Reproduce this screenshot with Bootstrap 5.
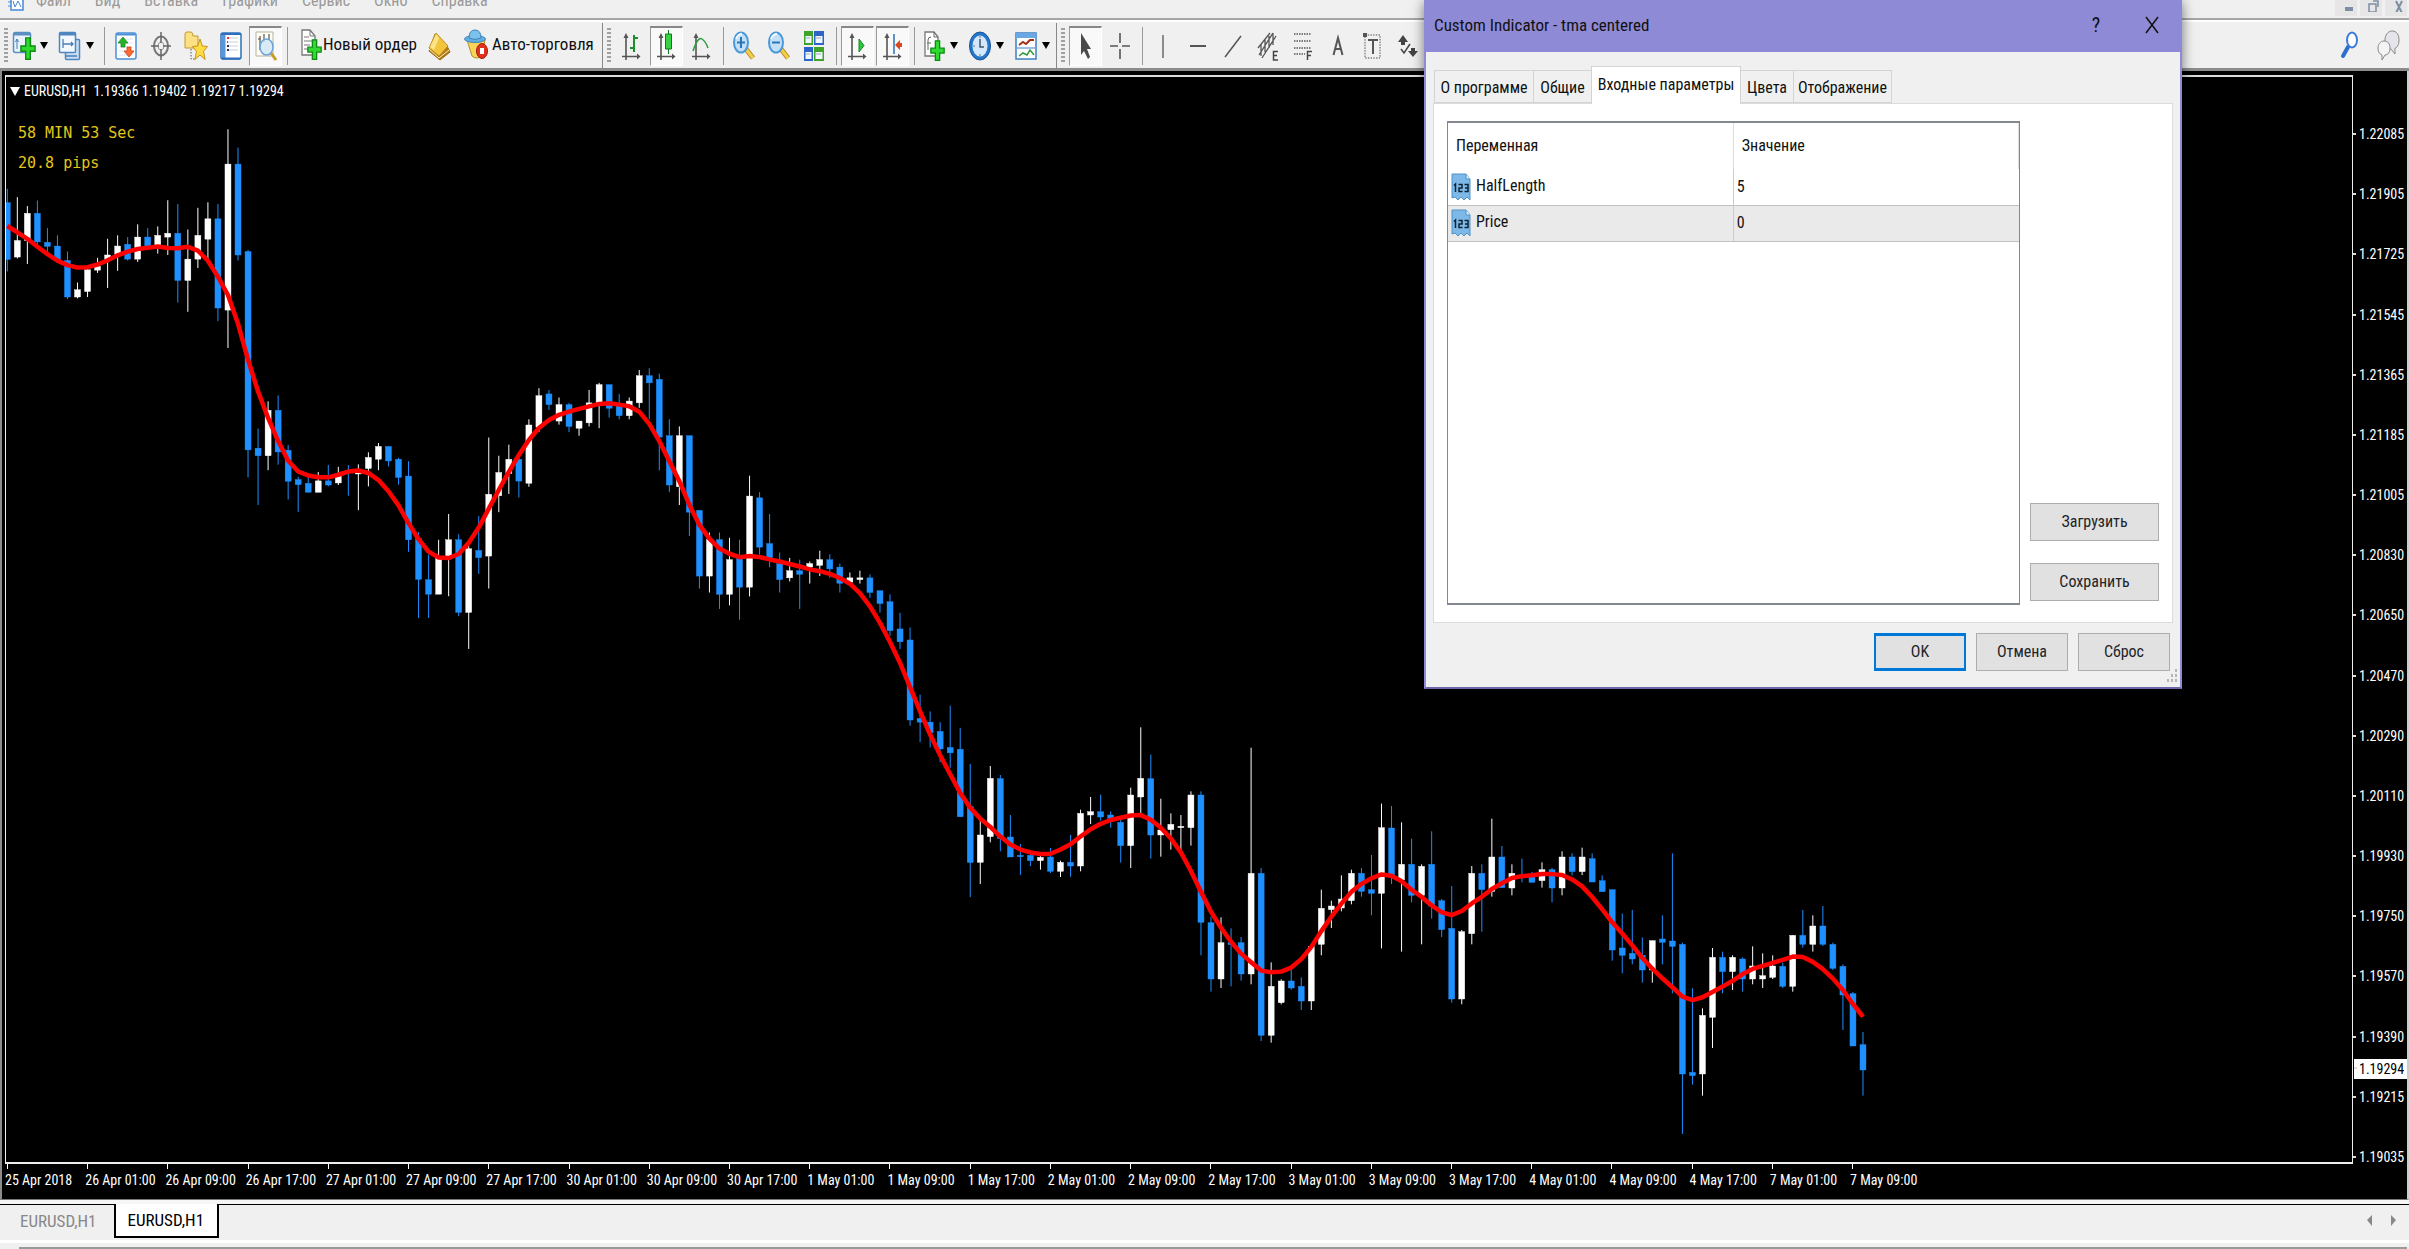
<!DOCTYPE html>
<html lang="ru">
<head>
<meta charset="utf-8">
<meta name="viewport" content="width=device-width, initial-scale=1">
<title>EURUSD,H1</title>
<link href="https://cdn.jsdelivr.net/npm/bootstrap@5.3.0/dist/css/bootstrap.min.css" rel="stylesheet">
<style>
:root{--ui:"Liberation Sans Narrow","Roboto Condensed","Liberation Sans",sans-serif;--face:#f0f0f0}
body{font-family:var(--ui);font-size:17px;line-height:20px;background:var(--face);color:#111;overflow:hidden}
button{font-family:inherit;color:inherit}
.menubar{height:18px;color:#999;overflow:hidden}
.menubar nav{padding-left:8px}
.menubar a{color:#999;text-decoration:none;font-size:16px;line-height:20px;margin:-9px 12px 0}
.menubar svg{width:16px;height:12px}
.winbtns{gap:3px;padding-right:2px}
.winbtns button{width:22px;height:16px;border:0;background:#e6e6e6;padding:0;display:flex;justify-content:center}
.toolbar{height:53px;padding-top:3px;border-top:2px solid #a6a6a6;border-bottom:3px solid #8c8c8c;box-shadow:inset 0 2px #fff}
.grip{width:4px;height:36px;background:repeating-linear-gradient(#a0a0a0 0 2px,transparent 2px 4px)}
.sep{width:8px;height:38px;background:linear-gradient(#999,#999) 4px 0/1px 100% no-repeat}
.dock{width:12px;height:46px;background:linear-gradient(#888,#888) 0 0/1px 100% no-repeat;padding-left:5px}
.tool{width:35px;height:42px;border:0;background:none;padding:0 1px}
.tool svg,.split svg,.wide svg,.tail svg{width:24px;height:32px;display:block}
.tool span{height:40px;width:33px;display:flex;align-items:center;justify-content:center}
.tool.on span{background:#f9f9f9;border:1px solid #fff;border-top:2px solid #888;border-left:1px solid #999}
.split{width:46px;border:0;background:none;padding:0 0 0 4px;display:flex;align-items:center;gap:4px}
.caret{width:0;border:4px solid transparent;border-top:7px solid #000;border-bottom:0}
.wide{border:0;background:none;padding:0 0 4px;display:flex;align-items:center;white-space:nowrap}
.tail{padding-right:8px;gap:15px}
.tail button{border:0;background:none;padding:0}
.frame{background:#000;border-left:2px solid #8c8c8c;border-right:2px solid #ccc;padding:4px 0 0 3px;border-bottom:1px solid #777;min-height:0}
.plot{border:1px solid #eee;border-top:2px solid #ddd;border-bottom:2px solid #eee;min-height:0}
.plot svg{position:absolute;inset:0;width:100%;height:100%}
.plot h1,.plot p{position:relative;margin:0;color:#fff}
.plot h1{font-size:14px;font-weight:400;line-height:20px;padding:4px 0 0 4px;gap:4px}
.plot h1 i{border:5px solid transparent;border-top:9px solid #fff;border-bottom:0}
.plot p{font:15px/30px "DejaVu Sans Mono",monospace;color:#e4c61c;padding-left:12px}
.plot .first{margin-top:17px}
.dates{width:82%;height:35px;color:#fff;font-size:14px}
.dates span{flex:1 1 0;white-space:nowrap;position:relative;padding-top:6px;line-height:20px}
.dates span::before{content:"";position:absolute;left:2px;top:0;width:1px;height:5px;background:#fff}
.prices{width:54px;color:#fff;font-size:14px;padding:50px 0 33px;position:relative}
.prices span{line-height:18px;padding-left:6px;position:relative}
.prices span::before{content:"";position:absolute;left:0;top:8px;width:3px;height:2px;background:#ddd}
.prices .quote{position:absolute;left:1px;right:0;top:984px;padding-left:5px;line-height:20px;background:#fff;color:#000}
.booktabs{height:39px;border-top:1px solid #000;margin-top:4px;box-shadow:0 -4px #f6f6f6;border-bottom:3px solid #fff}
.booktabs .nav-link{border:0;border-radius:0;color:#888;padding:5px 17px 0 20px;height:32px;line-height:22px}
.booktabs .nav-link.active{background:#fff;color:#000;border:2px solid #000;border-top:0;padding:5px 13px 0 12px;margin-top:-1px;height:34px}
.status{height:2px;margin:4px 2px 0 19px;background:#999}
.dlg{position:absolute;top:0;right:227px;width:758px;height:689px;background:var(--face);border:2px solid #8f8ad6;border-top:0;border-bottom-color:#6a66a8;box-shadow:0 2px 12px #0008}
.dlg header{height:52px;background:#8f8ad6;padding:0 16px 2px 8px}
.dlg header button{border:0;background:none;padding:0;width:24px;height:30px;display:flex;align-items:center;justify-content:center;font-size:20px}
.dlg .nav-tabs{padding:14px 0 0 8px;border:0;height:51px;align-items:flex-end}
.dlg .nav-tabs .nav-link{border:1px solid #d4d4d4;border-radius:0;color:#111;background:var(--face);padding:0;height:33px;line-height:34px;margin:0 -1px 0 0;text-align:center;font-size:16px;white-space:nowrap;flex:none}
.dlg .nav-tabs .nav-link.active{height:38px;background:#fff;border-bottom:0;line-height:36px;margin-bottom:-1px;position:relative}
.t1{width:100px}.t2{width:59px}.t3{width:150px}.t4{width:54px}.t5{width:99px}
.sheet{margin:0 7px;height:520px;background:#fff;border:1px solid #dcdcdc;padding:17px 13px 17px 13px;gap:10px}
.params{border:1px solid #828790;border-top-width:2px;border-bottom-width:2px}
.params table{width:100%;border-collapse:collapse;table-layout:fixed;font-size:16px}
.params th{height:46px;font-weight:400;padding:0 8px;border-right:1px solid #ddd}
.params td{height:36px;padding:0 4px 0 3px;border-right:1px solid #ccc;border-bottom:1px solid #c0c0c0}
.params td:last-child{border-right:0}
.params th:first-child{width:50%}
.params .pick{background:#eaeaea}
.params svg{width:20px;height:28px;margin-right:5px;vertical-align:middle}
.push{background:#e1e1e1;border:1px solid #adadad;border-radius:0;padding:0;height:38px;font-size:16px;line-height:36px}
.side{width:129px;gap:22px}
.foot{padding:10px 10px 0;gap:10px}
.foot .push{width:92px}
.push.ok{border:2px solid #0078d7;border-width:3px 2px;line-height:32px}
.sizer{position:absolute;right:3px;bottom:4px;width:10px;height:14px}
</style>
<script src="https://cdn.jsdelivr.net/npm/bootstrap@5.3.0/dist/js/bootstrap.bundle.min.js" defer></script>
</head>
<body class="vh-100 d-flex flex-column position-relative">

<svg class="d-none" aria-hidden="true">
 <symbol id="plus" viewBox="0 0 14 20" preserveAspectRatio="none"><path d="M5 .8h4v7h4.2v4.6H9v7H5v-7H.8V7.800H5z" fill="#2fd92f" stroke="#0c8a12" stroke-width="1.2"/></symbol>
 <symbol id="axes" viewBox="0 0 24 32"><path d="M7 5v25M3 26.500h17" stroke="#555" stroke-width="1.600" fill="none"/><path d="M7 3 4.500 8h5zM21.500 26.500 18 23.500v6z" fill="#555"/></symbol>
 <symbol id="glass" viewBox="0 0 24 32"><path d="m14 19 7 9" stroke="#b98a1e" stroke-width="5"/><path d="m14 19 7 9" stroke="#f4cf4e" stroke-width="3"/><ellipse cx="9" cy="12.500" rx="7" ry="10" fill="#c4e0f8" stroke="#4a9ad8" stroke-width="2"/><path d="M4 9q2-5 6-5" stroke="#f4faff" stroke-width="2" fill="none"/></symbol>
</svg>

<header class="menubar d-flex justify-content-between flex-shrink-0">
 <nav class="d-flex">
  <svg viewBox="0 0 16 12"><path d="M3 0v10h12V0" fill="#fff" stroke="#4a86d8" stroke-width="1.500"/><path d="m5 1 2 6 3-6 3 6M0 2h3M0 6h3" stroke="#4a86d8" fill="none"/></svg>
  <a href="#">Файл</a><a href="#">Вид</a><a href="#">Вставка</a><a href="#">Графики</a><a href="#">Сервис</a><a href="#">Окно</a><a href="#">Справка</a>
 </nav>
 <div class="winbtns d-flex">
  <button aria-label="Свернуть"><svg width="22" height="16"><path d="M7 9h8" stroke="#7d8ea3" stroke-width="4"/></svg></button>
  <button aria-label="Восстановить"><svg width="22" height="16"><path d="M6 4h7v8H6zM10 1h5v6" stroke="#7d8ea3" stroke-width="1.500" fill="none"/></svg></button>
  <button aria-label="Закрыть"><svg width="22" height="16"><path d="m8 13 6-12M8 1l6 12" stroke="#7d8ea3" stroke-width="2"/></svg></button>
 </div>
</header>

<div class="toolbar d-flex align-items-center flex-shrink-0">
 <div class="grip ms-1"></div>
 <button class="split" aria-label="Новый график"><svg viewBox="0 0 24 32"><rect x="1.500" y="2.500" width="17" height="20" rx="2" fill="#eaf3fc" stroke="#5b8fc4" stroke-width="1.500"/><path d="M2 4h16" stroke="#5b8fc4" stroke-width="3"/><path d="M5 9v10M3.500 12 5 9l1.500 3" stroke="#4a7db5" fill="none"/><use href="#plus" x="8" y="7" width="16" height="23"/></svg><i class="caret"></i></button>
 <button class="split" aria-label="Профили"><svg viewBox="0 0 24 32"><rect x="7.500" y="9.500" width="14" height="20" rx="1" fill="#c9def4" stroke="#4f86c0" stroke-width="1.500"/><rect x="1.500" y="2.500" width="16" height="20" rx="1" fill="#f2f8fe" stroke="#4f86c0" stroke-width="1.500"/><path d="M2 4h15" stroke="#4f86c0" stroke-width="3"/><path d="M5 9v9M5 14h10M13 12l2 2-2 2M8 26h11" stroke="#4a7db5" fill="none" stroke-width="1.300"/></svg><i class="caret"></i></button>
 <div class="sep"></div>
 <button class="tool" aria-label="Обзор рынка"><span><svg viewBox="0 0 24 32"><rect x="2" y="3" width="20" height="26" rx="2" fill="#fff" stroke="#4a90d9" stroke-width="1.500"/><path d="M3 4.500h18" stroke="#4a90d9" stroke-width="2"/><path d="M5 9h14M5 13h14M5 17h14M5 21h14M5 25h14" stroke="#d9e6f2"/><path d="m9 7 5 6h-3v4H7v-4H4z" fill="#27b327" stroke="#128012" stroke-width=".7"/><path d="m15 27 5-6h-3v-4h-4v4h-3z" fill="#ff6a33" stroke="#c03a10" stroke-width=".7"/></svg></span></button>
 <button class="tool" aria-label="Окно данных"><span><svg viewBox="0 0 24 32"><ellipse cx="12" cy="16" rx="7" ry="9.500" fill="none" stroke="#777" stroke-width="2"/><ellipse cx="12" cy="16" rx="3" ry="4" fill="none" stroke="#999"/><path d="M12 2v11M12 19v11M2 16h8M14 16h8" stroke="#666" stroke-width="1.500"/></svg></span></button>
 <button class="tool" aria-label="Навигатор"><span><svg viewBox="0 0 24 32"><path d="M1 4q0-2 2-2h4q2 0 2 4h5v12H1z" fill="#fbe184" stroke="#c49a2c"/><path d="M7 19v10h4" stroke="#555" stroke-dasharray="1.500 1.500" fill="none"/><path d="m16 9 2.300 7 5.200.5-4 5 1.600 8L16 25l-5.100 4.500 1.600-8-4-5 5.200-.5z" fill="#ffdb45" stroke="#c4941d"/></svg></span></button>
 <button class="tool" aria-label="Терминал"><span><svg viewBox="0 0 24 32"><rect x="2" y="3" width="20" height="26" rx="2" fill="#fff" stroke="#2d6fba" stroke-width="1.500"/><path d="M4.500 4v24" stroke="#5b97d6" stroke-width="4"/><path d="M2 4h20M3 28.500h18" stroke="#2d6fba" stroke-width="2"/><path d="M9 8h10M9 12h10M9 16h10M9 20h10" stroke="#ccd"/><path d="M8 8h2M8 12h1" stroke="#e33" stroke-width="2"/><path d="M8 16h2M8 20h2" stroke="#236" stroke-width="2"/></svg></span></button>
 <button class="tool on" aria-label="Тестер стратегий"><span><svg viewBox="0 0 24 32"><path d="M2 2h17v24H2z" fill="#fffdf4" stroke="#b5b3a0"/><path d="M6 6v14M4 9h3M10 4v8M15 4v6" stroke="#777" stroke-width="1.500"/><path d="m17 23 5 7" stroke="#c99a2a" stroke-width="3"/><ellipse cx="12.500" cy="17" rx="6.500" ry="8" fill="#cfe5f8cc" stroke="#6aa4d8" stroke-width="1.500"/></svg></span></button>
 <div class="sep"></div>
 <button class="wide ms-2"><svg viewBox="0 0 24 32"><path d="M3 2h8l5 6v19H3z" fill="#fff" stroke="#777" stroke-width="1.300"/><path d="M11 2v6h5M5 9h5M5 13h8M5 17h6M5 21h4" stroke="#777" fill="none"/><use href="#plus" x="8" y="11" width="15" height="21"/></svg><span>Новый ордер</span></button>
 <button class="tool ms-1" aria-label="Редактор"><span><svg viewBox="0 0 24 32"><path d="M8 4 20 16l3 6-10 8-11-9z" fill="#b57a14" stroke="#96690f"/><path d="M9 3 21 16l-9 10-10-8z" fill="#f2c53d" stroke="#c08c1c"/><path d="m9 4-6 13 4 3 5-12z" fill="#fbe388"/><path d="m2 19 10 9 10-8" stroke="#fff0b8" fill="none"/></svg></span></button>
 <button class="wide ms-2 gap-1"><svg viewBox="0 0 24 32"><path d="M3 12h18l-3 16q-6 4-10 0z" fill="#f8d557" stroke="#b88d25"/><ellipse cx="11" cy="11" rx="10.500" ry="3.500" fill="#63aee0" stroke="#3c84b8"/><path d="M5 10q0-8 6-8t6 8q-6 3-12 0" fill="#7cc0ec" stroke="#3c84b8"/><ellipse cx="18" cy="23" rx="5.500" ry="7.500" fill="#e2301e" stroke="#a51b0e"/><path d="M16 20h4v6h-4z" fill="#fff"/></svg><span>Авто-торговля</span></button>
 <div class="dock d-flex align-items-center ms-2"><div class="grip"></div></div>
 <button class="tool" aria-label="Бары"><span><svg viewBox="0 0 24 32"><use href="#axes"/><path d="M15 5v17M15 8h4M11 18h4" stroke="#1b8f2c" stroke-width="2"/></svg></span></button>
 <button class="tool on" aria-label="Свечи"><span><svg viewBox="0 0 24 32"><use href="#axes"/><path d="M14.500 0v24" stroke="#14761f"/><path d="M11.500 4h6v15h-6z" fill="#35d243" stroke="#14761f"/></svg></span></button>
 <button class="tool" aria-label="Линия"><span><svg viewBox="0 0 24 32"><use href="#axes"/><path d="M4 21q5-15 9-12 4 3 6 9" stroke="#2f9a3d" fill="none" stroke-width="1.500"/></svg></span></button>
 <div class="sep"></div>
 <button class="tool" aria-label="Увеличить"><span><svg viewBox="0 0 24 32"><use href="#glass"/><path d="M5 12.500h8M9 7v11" stroke="#2877b8" stroke-width="2"/></svg></span></button>
 <button class="tool" aria-label="Уменьшить"><span><svg viewBox="0 0 24 32"><use href="#glass"/><path d="M5 12.500h8" stroke="#2877b8" stroke-width="2"/></svg></span></button>
 <button class="tool" aria-label="Окна мозаикой"><span><svg viewBox="0 0 24 32"><path d="M2 1h9v14H2zM12 17h10v14H12z" fill="#3fa32a"/><path d="M12 1h10v14H12zM2 17h9v14H2z" fill="#2d64c8"/><path d="M3.500 6h6v7h-6zM13.500 6h7v7h-7zM3.500 22h6v7h-6zM13.500 22h7v7h-7z" fill="#f2f7ff"/><path d="M4 8h4M14 8h5M4 24h4M14 24h5" stroke="#9ab"/></svg></span></button>
 <div class="sep"></div>
 <button class="tool on" aria-label="Автопрокрутка"><span><svg viewBox="0 0 24 32"><use href="#axes"/><path d="m14 9 5 6.500-5 6.500z" fill="#2fc53e" stroke="#128a20"/></svg></span></button>
 <button class="tool on" aria-label="Сдвиг графика"><span><svg viewBox="0 0 24 32"><use href="#axes"/><path d="M14 4v20" stroke="#2a6fb5" stroke-width="1.500"/><path d="m15 15 5-5v3h2v4h-2v3z" fill="#d9481e"/></svg></span></button>
 <div class="sep"></div>
 <button class="split" aria-label="Индикаторы"><svg viewBox="0 0 24 32"><path d="M3 2h9l4 5v19H3z" fill="#fff" stroke="#777" stroke-width="1.300"/><path d="M12 2v5h4M6 20V10q0-3 3-3M5 13h4" stroke="#666" fill="none"/><use href="#plus" x="8" y="10" width="15" height="21"/></svg><i class="caret"></i></button>
 <button class="split" aria-label="Периоды"><svg viewBox="0 0 24 32"><ellipse cx="12" cy="16" rx="10.500" ry="14" fill="#2576c8" stroke="#1a559a"/><ellipse cx="12" cy="16" rx="7.500" ry="10.500" fill="#d3e9fb"/><path d="M12 9v8h4M12 7.500v-1M12 25.500v-1M5.500 16h1" stroke="#456" stroke-width="1.500" fill="none"/></svg><i class="caret"></i></button>
 <button class="split" aria-label="Шаблоны"><svg viewBox="0 0 24 32"><rect x="2" y="3" width="20" height="26" fill="#fff" stroke="#3d7fc4" stroke-width="1.500"/><path d="M2 5.500h20" stroke="#6aa8e4" stroke-width="5"/><path d="m5 15 4-3 3 2 4-4h4" stroke="#a33014" stroke-width="2" fill="none"/><path d="M3 18h18" stroke="#3d7fc4"/><path d="m5 26 4-3 4 2 3-5 4 5" stroke="#2f9a3d" stroke-width="1.500" fill="none"/></svg><i class="caret"></i></button>
 <div class="dock d-flex align-items-center"><div class="grip"></div></div>
 <button class="tool on" aria-label="Курсор"><span><svg viewBox="0 0 24 32"><path d="M8 3v22l3-4 4 8 2-2-3-8h4z" fill="#4a4a4a"/></svg></span></button>
 <button class="tool" aria-label="Перекрестие"><span><svg viewBox="0 0 24 32"><path d="M12 3v10M12 19v10M2 16h8M14 16h8" stroke="#555" stroke-width="1.600"/></svg></span></button>
 <div class="sep"></div>
 <button class="tool" aria-label="Вертикальная линия"><span><svg viewBox="0 0 24 32"><path d="M12 5v23" stroke="#555" stroke-width="1.300"/></svg></span></button>
 <button class="tool" aria-label="Горизонтальная линия"><span><svg viewBox="0 0 24 32"><path d="M4 16h16" stroke="#555" stroke-width="2"/></svg></span></button>
 <button class="tool" aria-label="Трендовая линия"><span><svg viewBox="0 0 24 32"><path d="M4 27 20 6" stroke="#555" stroke-width="1.500"/></svg></span></button>
 <button class="tool" aria-label="Канал"><span><svg viewBox="0 0 24 32"><path d="M3 25 17 3M6 28 20 6M2 18 14 3M5 14v12M9 10v12M13 6v12M17 3v12" stroke="#555" stroke-width="1.300"/><path d="M22 21.500h-4.500v8.500H22M17.500 25.500H21" stroke="#444" stroke-width="1.500" fill="none"/></svg></span></button>
 <button class="tool" aria-label="Фибоначчи"><span><svg viewBox="0 0 24 32"><path d="M3 4h17M3 11h17M3 18h17M3 24h11" stroke="#555" stroke-width="1.600" stroke-dasharray="1.500 1"/><path d="M21 21.500h-4.500V30M16.500 25.500H20" stroke="#444" stroke-width="1.500" fill="none"/></svg></span></button>
 <button class="tool" aria-label="Текст"><span><svg viewBox="0 0 24 32"><path d="M7.500 25 12 8l4.500 17M9 19h6" stroke="#555" stroke-width="2" fill="none"/></svg></span></button>
 <button class="tool" aria-label="Метка"><span><svg viewBox="0 0 24 32"><rect x="4" y="5" width="15" height="23" fill="none" stroke="#555" stroke-dasharray="1.500 1.200"/><path d="M7 10h10M12 10v14" stroke="#555" stroke-width="2"/><path d="M2 3h4v4H2z" fill="#555"/></svg></span></button>
 <button class="tool" aria-label="Стрелки"><span><svg viewBox="0 0 24 32"><path d="m7 5 5 7H9v3H5v-3H2zM17 27l-5-6h3v-3h4v3h3z" fill="#444"/><path d="m5 19 3 4 6-9" stroke="#444" stroke-width="1.500" fill="none"/></svg></span></button>
 <div class="tail d-flex align-items-center ms-auto">
  <button aria-label="Поиск"><svg viewBox="0 0 24 32"><path d="m10 17-5 9" stroke="#2c6fd0" stroke-width="4" stroke-linecap="round"/><ellipse cx="14" cy="10" rx="5" ry="7.500" fill="#fff" stroke="#3b7ddd" stroke-width="2"/></svg></button>
  <button aria-label="Чат"><svg viewBox="0 0 24 32"><path d="M15 1c5 0 7 4 7 9s-2 8-4 8v6l-4-5c-4 0-6-4-6-9s3-9 7-9z" fill="#e4e4ea" stroke="#888"/><path d="M7 11c4 0 6 3 6 7s-2 7-5 7l-3 5v-5c-3-1-4-4-4-7s2-7 6-7z" fill="#f4f4f7" stroke="#888"/></svg></button>
 </div>
</div>

<main class="frame d-flex flex-fill">
 <div class="d-flex flex-column flex-fill">
  <section class="plot flex-fill position-relative overflow-hidden">
   <svg id="chart" viewBox="0 0 2347 1085" preserveAspectRatio="none" role="img" aria-label="EURUSD,H1"></svg>
   <h1 class="d-flex align-items-center"><i></i><span>EURUSD,H1&nbsp; 1.19366 1.19402 1.19217 1.19294</span></h1>
   <p class="first">58 MIN 53 Sec</p>
   <p>20.8 pips</p>
  </section>
  <div class="dates d-flex flex-shrink-0" id="dates"></div>
 </div>
 <aside class="prices d-flex flex-column justify-content-between" id="prices"></aside>
</main>

<div class="booktabs d-flex justify-content-between flex-shrink-0">
 <nav class="nav flex-nowrap"><a class="nav-link" href="#">EURUSD,H1</a><a class="nav-link active" href="#">EURUSD,H1</a></nav>
 <svg width="48" height="30" class="me-1"><path d="m15 10-5 5 5 6zM34 10l5 5-5 6z" fill="#888"/></svg>
</div>
<div class="status flex-shrink-0"></div>

<section class="dlg" role="dialog" aria-labelledby="dlgTitle">
 <header class="d-flex align-items-center">
  <span id="dlgTitle" class="me-auto">Custom Indicator - tma centered</span>
  <button class="me-4">?</button>
  <button class="ms-2" aria-label="Закрыть"><svg width="14" height="18"><path d="m1 1 12 16M13 1 1 17" stroke="#111" stroke-width="1.500"/></svg></button>
 </header>
 <nav class="nav nav-tabs flex-nowrap">
  <a class="nav-link t1" href="#">О программе</a><a class="nav-link t2" href="#">Общие</a><a class="nav-link active t3" href="#">Входные параметры</a><a class="nav-link t4" href="#">Цвета</a><a class="nav-link t5" href="#">Отображение</a>
 </nav>
 <div class="sheet d-flex">
  <div class="params flex-fill">
   <table>
    <thead><tr><th>Переменная</th><th>Значение</th></tr></thead>
    <tbody>
     <tr><td><svg viewBox="0 0 20 28"><path d="M1 1h14l4 5v21l-3-3-3 3-3-3-3 3-3-3-3 1z" fill="#7db9e8" stroke="#4e92c8"/><path d="M15 1v5h4" fill="#d8edfb" stroke="#4e92c8"/><path d="M3 12.500 4.500 11v8M7.500 11.500H11V15H8v3.500h3.500M13.500 11.500H17v7h-3.500M14 15h3" stroke="#123" stroke-width="1.500" fill="none"/></svg>HalfLength</td><td>5</td></tr>
     <tr class="pick"><td><svg viewBox="0 0 20 28"><path d="M1 1h14l4 5v21l-3-3-3 3-3-3-3 3-3-3-3 1z" fill="#7db9e8" stroke="#4e92c8"/><path d="M15 1v5h4" fill="#d8edfb" stroke="#4e92c8"/><path d="M3 12.500 4.500 11v8M7.500 11.500H11V15H8v3.500h3.500M13.500 11.500H17v7h-3.500M14 15h3" stroke="#123" stroke-width="1.500" fill="none"/></svg>Price</td><td>0</td></tr>
    </tbody>
   </table>
  </div>
  <div class="side d-flex flex-column justify-content-end flex-shrink-0">
   <button class="btn push">Загрузить</button>
   <button class="btn push mb-1">Сохранить</button>
  </div>
 </div>
 <div class="foot d-flex justify-content-end">
  <button class="btn push ok">OK</button><button class="btn push">Отмена</button><button class="btn push">Сброс</button>
 </div>
 <svg class="sizer" viewBox="0 0 10 14"><path d="M8 0h2v3H8zM8 5h2v3H8zM4 5h2v3H4zM8 10h2v3H8zM4 10h2v3H4zM0 10h2v3H0z" fill="#b5b5b5"/></svg>
</section>

<script>
// Candles by session block: w = rising, b = falling; high, body top, body bottom, low.
// Each block has its own origin and unit.
const blocks = [
 {origin:43, unit:2.904, bars:`b200,240,405,440 w224,350,398,402 w250,271,350,418 b234,271,354,360 b314,355,367,382 b335,366,408,412 b382,408,514,520 w472,493,514,518 w432,435,498,514 w400,425,436,444 w345,392,408,488 w335,366,390,438 b340,361,404,408 w303,340,404,412 b314,340,368,372 w309,335,366,388 w233,329,340,392 b244,329,466,530 w318,404,466,557 w255,335,404,430 w239,287,346,404 b244,287,546,584 w27,128,552,662 b80,128,392,408 b377,382,958,1038 b896,953,975,1118 w817,843,975,1017 b800,843,964,1001 b944,959,1049,1102 b1036,1044,1059,1138 b1036,1055,1081,1081 w1022,1048,1081,1081 b1002,1048,1060,1064 w1007,1030,1054,1060 b1002,1018,1021,1091 w1000,1018,1028,1133 w965,980,1012,1064 w938,948,985,1017 b948,948,990,1006 b981,985,1038,1059 b991,1034,1219,1254 b1197,1215,1334,1446 b1262,1335,1377,1446 w1219,1270,1377,1377 w1144,1219,1275,1383 b1203,1219,1430,1441 w1236,1245,1430,1536 b1150,1250,1271,1318`},
 {origin:273, unit:2.8, bars:`w245,404,577,668 w296,343,408,454 w265,306,346,403 b300,306,367,413 w194,210,373,383 w107,128,216,230 b112,123,153,168 w133,153,199,209 b148,153,214,230 w199,199,219,240 w112,148,204,214 w92,97,153,219 b97,97,163,189 b123,155,184,194 w133,143,184,194 w56,72,148,162 b51,72,92,194 b66,82,244,337 b194,240,378,398 w214,240,383,434 b240,240,454,521 b449,449,633,668 w511,531,633,679 b511,531,684,725 w526,587,684,715 b531,583,664,755 w352,409,664,690 b398,414,552,573 b459,542,585,608 b567,598,643,679 w582,618,638,648 b587,618,628,725 w592,598,608,654 w562,587,603,633 b572,587,613,638 b598,608,653,679 w623,638,650,660 w618,638,643,654 b628,638,679,694 b674,674,710,735 b684,705,786,800 b736,781,817,837 b777,812,1036,1052 b965,1032,1042,1098 b1012,1042,1072,1113 b1042,1068,1117,1154 b996,1113,1128,1170 b1058,1118,1307,1307 b1159,1278,1435,1532`},
 {origin:623, unit:3, bars:`w360,405,487,552 w198,235,410,427 b225,236,416,454 b345,411,471,471 b432,466,470,525 b460,466,482,498 w465,472,482,509 b444,471,514,519 w482,487,514,531 b405,487,498,530 w329,340,498,514 w291,335,345,372 b284,335,351,362 b334,345,355,383 b360,367,437,488 w263,285,437,504 w82,235,291,345 b164,236,405,476 w296,390,405,470 w340,373,389,449 w345,379,383,450 w274,285,383,437 b274,285,667,766 b650,668,837,875 w652,728,837,864 b685,728,734,859 b711,728,822,842 w143,520,822,853 b504,520,1006,1023 w787,859,1006,1028 w838,843,908,913 b800,843,864,869 b832,859,903,930 w735,740,903,930 w569,625,733,766 w602,618,629,684 w526,597,624,634 w509,520,602,613 b504,520,574,590 b465,569,580,646 w311,383,580,745`},
 {origin:703, unit:3, bars:`b78,144,286,312 w127,253,300,515 b176,253,346,367 w253,259,346,493 b154,253,378,416 b357,362,449,471 b318,445,657,668 w450,455,657,673 w258,280,461,493 b253,280,329,455 w116,231,334,350 b198,231,323,323 w253,280,324,346 b236,285,290,307 b276,290,307,307 w247,269,302,323 b264,269,324,367 w214,231,324,346 b220,231,275,286 w203,231,275,285 b220,236,306,306 b286,302,335,335 b329,329,510,542 b401,504,526,580 b390,520,537,553 b472,526,570,608 w482,482,570,608 b406,477,487,553 b220,483,499,640 b488,493,882,1062 b625,877,887,914 w685,706,882,947 w504,532,712,804 b515,532,575,640 w526,532,575,630 b532,537,597,635 w499,558,597,613 w520,587,597,624 w526,558,592,597 b548,559,619,624 w466,466,619,635 b390,466,493,503 w406,438,493,515 b378,438,493,498 b488,493,565,570 b553,559,645,750 b636,641,798,798 b756,794,870,947`}
];
const candles = blocks.flatMap(k => k.bars.split(' ').map(s => ({
  up: s[0] === 'w', v: s.slice(1).split(',').map(n => k.origin + n / k.unit)
})));
const step = 10.035, x0 = 1.3;
let out = '';
candles.forEach((c, i) => {
  const x = x0 + i * step, [h, t, b, l] = c.v, col = c.up ? '#fff' : '#1e90ff';
  out += `<path d="M${x} ${h}V${l}" stroke="${col}"/><rect x="${x - 3}" y="${t}" width="6" height="${Math.max(b - t, 1)}" fill="${col}" stroke="${col}" stroke-width=".4"/>`;
});
// Centered triangular moving average, HalfLength = 5, by close.
const half = 5, before = Array(half).fill(126);
const close = before.concat(candles.map(c => c.up ? c.v[1] : c.v[2]));
const pts = candles.map((c, n) => {
  const i = n + half;
  let sum = (half + 1) * close[i], w = half + 1;
  for (let j = 1, k = half; j <= half; j++, k--) {
    sum += k * close[i - j]; w += k;
    if (i + j < close.length) { sum += k * close[i + j]; w += k; }
  }
  return `${x0 + n * step},${sum / w}`;
});
out += `<polyline points="${pts.join(' ')}" fill="none" stroke="#f00" stroke-width="4.500" stroke-linejoin="round"/>`;
document.getElementById('chart').innerHTML = out;

const days = ['25 Apr 2018','26 Apr 01:00','26 Apr 09:00','26 Apr 17:00','27 Apr 01:00','27 Apr 09:00','27 Apr 17:00','30 Apr 01:00','30 Apr 09:00','30 Apr 17:00','1 May 01:00','1 May 09:00','1 May 17:00','2 May 01:00','2 May 09:00','2 May 17:00','3 May 01:00','3 May 09:00','3 May 17:00','4 May 01:00','4 May 09:00','4 May 17:00','7 May 01:00','7 May 09:00'];
document.getElementById('dates').innerHTML = days.map(d => `<span>${d}</span>`).join('');
const levels = ['1.22085','1.21905','1.21725','1.21545','1.21365','1.21185','1.21005','1.20830','1.20650','1.20470','1.20290','1.20110','1.19930','1.19750','1.19570','1.19390','1.19215','1.19035'];
document.getElementById('prices').innerHTML = levels.map(p => `<span>${p}</span>`).join('') + '<span class="quote">1.19294</span>';
</script>
</body>
</html>
